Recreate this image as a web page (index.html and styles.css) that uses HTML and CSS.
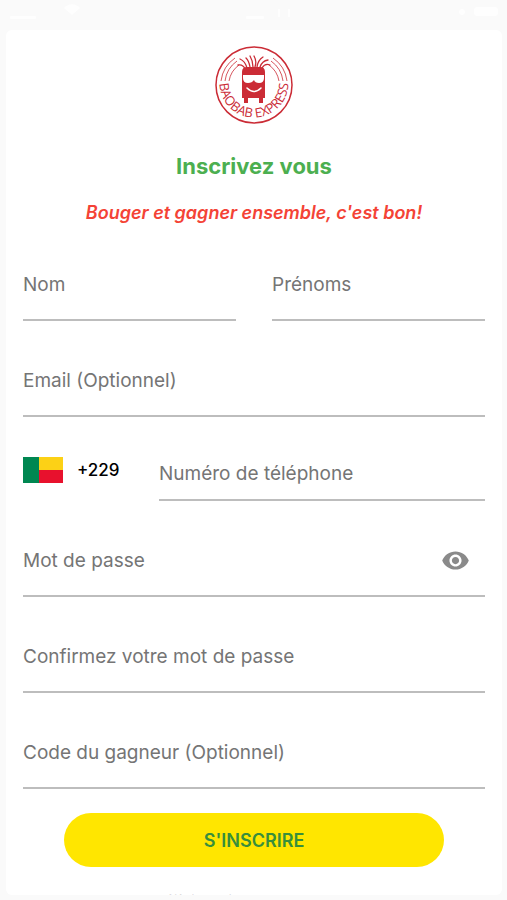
FILE: index.html
```
<!DOCTYPE html>
<html lang="fr">
<head>
    <meta charset="UTF-8">
    <meta name="viewport" content="width=device-width, initial-scale=1.0">
    <title>Baobab Express - Inscription</title>
    <link rel="stylesheet" href="styles.css">
</head>
<body>
    <!-- barre d'état -->
    <div class="status-bar" aria-hidden="true">
        <svg class="status-left" viewBox="0 0 76 20">
            <rect x="4" y="16" width="26" height="3" rx="1"/>
            <path d="M58 8c5-5 11-5 16 0l-8 7z"/>
        </svg>
        <svg class="status-center" viewBox="0 0 50 20">
            <rect x="4" y="16" width="18" height="3" rx="1"/>
            <rect x="36" y="9" width="2" height="8"/>
            <rect x="46" y="9" width="2" height="8"/>
        </svg>
        <svg class="status-right" viewBox="0 0 50 20">
            <circle cx="10" cy="12" r="3"/>
            <rect x="22" y="7" width="24" height="9" rx="3"/>
        </svg>
    </div>

    <main class="card">
        <svg class="logo" viewBox="0 0 80 80" role="img" aria-label="Baobab Express">
            <defs>
                <path id="logo-arc" d="M5.500 38A34.500 34.500 0 0 0 74.500 38"/>
            </defs>
            <circle class="logo-line logo-ring" cx="40" cy="40" r="38"/>
            <!-- arcs de chaque côté -->
            <path class="logo-line" d="M7 36A33 33 0 0 1 21 13M11 36A29 29 0 0 1 23 16M15 36A25 25 0 0 1 25 20"/>
            <path class="logo-line" d="M73 36A33 33 0 0 0 59 13M69 36A29 29 0 0 0 57 16M65 36A25 25 0 0 0 55 20"/>
            <!-- cheveux -->
            <path class="logo-hair" d="M31 24Q29 19 24 20M33 23Q31 16 26 14M36 22Q35 16 32 13M39 22Q39 16 36 11M41 22Q43 16 40 11M43 22Q44 15 49 12M46 22Q48 16 54 15M48 23Q51 18 56 20"/>
            <path class="logo-fill" d="M28 27Q28 22 33 22H46Q51 22 51 27V53H49V58H45V53H34V58H30V53H28z"/>
            <path class="logo-white" d="M29 30H50V33Q50 38 45 38Q41 38 40 35Q38 38 34 38Q29 38 29 33z"/>
            <path class="logo-smile" d="M33 43Q40 50 47 43"/>
            <text class="logo-text"><textPath href="#logo-arc" startOffset="50%">BAOBAB EXPRESS</textPath></text>
        </svg>

        <h1 class="title">Inscrivez vous</h1>
        <p class="slogan">Bouger et gagner ensemble, c'est bon!</p>

        <form class="form">
            <div class="row">
                <input class="field" type="text" name="nom" placeholder="Nom" aria-label="Nom">
                <input class="field" type="text" name="prenoms" placeholder="Prénoms" aria-label="Prénoms">
            </div>
            <input class="field" type="email" name="email" placeholder="Email (Optionnel)" aria-label="Email (Optionnel)">
            <div class="phone">
                <button class="country" type="button" aria-label="Bénin +229">
                    <svg class="flag" viewBox="0 0 40 26">
                        <rect width="40" height="26" fill="#e8112d"/>
                        <rect width="40" height="13" fill="#fcd116"/>
                        <rect width="16" height="26" fill="#008751"/>
                    </svg>
                    <span>+229</span>
                </button>
                <input class="field phone-field" type="tel" name="telephone" placeholder="Numéro de téléphone" aria-label="Numéro de téléphone">
            </div>
            <div class="password">
                <input class="field" type="password" name="password" placeholder="Mot de passe" aria-label="Mot de passe">
                <button class="eye" type="button" aria-label="Afficher le mot de passe">
                    <svg viewBox="0 0 24 24">
                        <path d="M12 4.500C7 4.500 2.730 7.610 1 12c1.730 4.390 6 7.500 11 7.500s9.270-3.110 11-7.500c-1.730-4.390-6-7.500-11-7.500zM12 17c-2.760 0-5-2.240-5-5s2.240-5 5-5 5 2.240 5 5-2.240 5-5 5zm0-8c-1.660 0-3 1.340-3 3s1.340 3 3 3 3-1.340 3-3-1.340-3-3-3z"/>
                    </svg>
                </button>
            </div>
            <input class="field" type="password" name="confirmation" placeholder="Confirmez votre mot de passe" aria-label="Confirmez votre mot de passe">
            <input class="field" type="text" name="code" placeholder="Code du gagneur (Optionnel)" aria-label="Code du gagneur (Optionnel)">
            <button class="submit" type="submit">S'INSCRIRE</button>
        </form>
        <a class="login" href="#">Déjà inscrit ? Se connecter</a>
    </main>
</body>
</html>
```
FILE: styles.css
```
* {
    box-sizing: border-box;
}

body {
    margin: 0;
    height: 100vh;
    display: flex;
    flex-direction: column;
    padding: 0 5px 5px 6px;
    overflow: hidden;
    background-color: #fafafa;
    font-family: Inter, "Liberation Sans", sans-serif;
}

button,
input {
    font-family: inherit;
}

.status-bar {
    flex: none;
    display: flex;
    justify-content: space-between;
    height: 30px;
    fill: #fefefe;
}

.status-bar svg {
    height: 20px;
}

.card {
    flex: 1;
    min-height: 0;
    overflow: hidden;
    padding: 15px 17px 0;
    border-radius: 6px;
    background-color: #fff;
}

.logo {
    display: block;
    width: 80px;
    height: 80px;
    margin: 0 auto;
}

.logo-line {
    fill: none;
    stroke: #cb2c36;
    stroke-width: 0.8;
}

.logo-ring {
    stroke-width: 1.5;
}

.logo-hair {
    fill: none;
    stroke: #cb2c36;
    stroke-width: 1.3;
    stroke-linecap: round;
}

.logo-fill {
    fill: #cb2c36;
}

.logo-white {
    fill: #fff;
}

.logo-smile {
    fill: none;
    stroke: #fff;
    stroke-width: 1.5;
    stroke-linecap: round;
}

.logo-text {
    fill: #cb2c36;
    font-family: "Liberation Sans Narrow", "Open Sans", sans-serif;
    font-size: 13px;
    text-anchor: middle;
}

.title {
    margin: 25px 0 0;
    color: #4caf50;
    font-size: 22px;
    line-height: 32px;
    font-weight: 700;
    text-align: center;
}

.slogan {
    margin: 19px 0 0;
    color: #f44336;
    font-size: 18px;
    line-height: 24px;
    font-weight: 600;
    font-style: italic;
    text-align: center;
}

.form {
    display: flex;
    flex-direction: column;
    gap: 24px;
    margin-top: 24px;
}

.row {
    display: grid;
    grid-template-columns: 1fr 1fr;
    gap: 36px;
}

.field {
    width: 100%;
    height: 72px;
    padding: 0;
    border: 0;
    border-bottom: 2px solid #bdbdbd;
    border-radius: 0;
    outline: none;
    background: none;
    color: #212121;
    font-size: 19px;
}

.field::placeholder {
    color: #757575;
    opacity: 1;
}

.phone {
    display: flex;
    gap: 24px;
    height: 60px;
}

.country {
    display: flex;
    align-items: center;
    gap: 14px;
    width: 112px;
    height: 58px;
    padding: 0;
    border: 0;
    background: none;
    color: #000;
    font-size: 17px;
    font-weight: 500;
}

.flag {
    width: 40px;
    height: 26px;
}

.phone-field {
    flex: 1;
    height: 60px;
    padding-top: 6px;
}

.password {
    display: flex;
    border-bottom: 2px solid #bdbdbd;
}

.password .field {
    flex: 1;
    height: 70px;
    border: 0;
}

.eye {
    width: 60px;
    padding: 0;
    border: 0;
    background: none;
}

.eye svg {
    display: block;
    width: 29px;
    height: 29px;
    margin: 0 auto;
    fill: #8a8a8a;
}

.submit {
    width: 380px;
    max-width: 100%;
    height: 54px;
    margin: 0 auto;
    border: 0;
    border-radius: 27px;
    background-color: #ffe600;
    color: #388e3c;
    font-size: 18px;
    font-weight: 600;
}

.login {
    display: block;
    margin-top: 24px;
    color: #757575;
    font-size: 16px;
    line-height: 20px;
    text-align: center;
    text-decoration: none;
}
```
